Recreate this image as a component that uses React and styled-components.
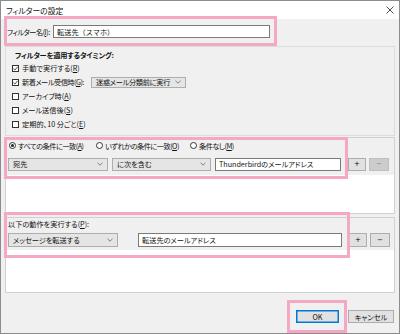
import React from "react";
import styled, { createGlobalStyle } from "styled-components";

const Global = createGlobalStyle`
  html, body { margin: 0; padding: 0; background: #fff; }
  * { box-sizing: border-box; }
  body {
    font-family: "Noto Sans CJK JP", "Noto Sans", sans-serif;
    font-size: 7.2px;
    font-feature-settings: "palt";
    color: #111;
  }
`;

const Window = styled.div`
  position: relative;
  width: 400px;
  height: 334px;
  border: 1px solid #8c8c8c;
  background: #f0f0f0;
  display: flex;
  flex-direction: column;
  overflow: hidden;
`;

const TitleBar = styled.div`
  height: 18px;
  background: #fff;
  display: flex;
  align-items: center;
  justify-content: space-between;
  padding: 0 5px 0 5px;
  font-size: 7.8px;
`;

const CloseIcon = () => (
  <svg width="8" height="8" viewBox="0 0 8 8">
    <path d="M0.5 0.5 L7.5 7.5 M7.5 0.5 L0.5 7.5" stroke="#222" strokeWidth="0.8" />
  </svg>
);

const Body = styled.div`
  flex: 1;
  display: flex;
  flex-direction: column;
  padding: 0 4px;
`;

const NameRow = styled.div`
  margin-top: 6px;
  height: 13px;
  display: flex;
  align-items: center;
  padding-left: 2px;
`;

const Label = styled.span`
  width: ${(p) => (p.$w ? p.$w + "px" : "auto")};
  flex: none;
  white-space: nowrap;
  letter-spacing: ${(p) => (p.$tight ? "-0.5px" : "0")};
`;

const TextInput = styled.div`
  width: ${(p) => p.$w}px;
  height: ${(p) => p.$h || 13}px;
  margin-left: ${(p) => p.$ml || 0}px;
  background: #fff;
  border: 1px solid #7a7a7a;
  display: flex;
  align-items: center;
  padding-left: 3px;
  white-space: nowrap;
  flex: none;
  font-feature-settings: ${(p) => (p.$wide ? "normal" : "'palt'")};
`;

const Group = styled.div`
  margin-top: 8px;
  height: 90px;
  border: 1px solid #dcdcdc;
  display: flex;
  flex-direction: column;
  padding: 3px 0 0 6px;
`;

const GroupTitle = styled.div`
  height: 10px;
  display: flex;
  align-items: center;
  padding-left: 3px;
  font-weight: 700;
  letter-spacing: -0.2px;
  margin-bottom: 1px;
`;

const CheckRow = styled.div`
  height: 14px;
  display: flex;
  align-items: center;
  gap: 3px;
`;

const Box = styled.span`
  width: 7px;
  height: 7px;
  border: 1px solid #333;
  background: #fff;
  flex: none;
  display: flex;
  align-items: center;
  justify-content: center;
`;

const Check = ({ on }) => (
  <Box>
    {on && (
      <svg width="5" height="5" viewBox="0 0 5 5">
        <path d="M0.4 2.6 L1.9 4 L4.6 0.8" stroke="#222" strokeWidth="0.8" fill="none" />
      </svg>
    )}
  </Box>
);

const Select = styled.div`
  width: ${(p) => p.$w}px;
  height: ${(p) => p.$h || 13}px;
  margin-left: ${(p) => p.$ml || 0}px;
  background: #e5e5e5;
  border: 1px solid #adadad;
  display: flex;
  align-items: center;
  justify-content: space-between;
  padding: 0 4px 0 4px;
  white-space: nowrap;
  flex: none;
  letter-spacing: ${(p) => (p.$tight ? "-0.3px" : "0")};
`;

const Chevron = () => (
  <svg width="6" height="4" viewBox="0 0 6 4">
    <path d="M0.5 0.8 L3 3.2 L5.5 0.8" stroke="#555" strokeWidth="0.7" fill="none" />
  </svg>
);

const SectionBox = styled.div`
  margin-top: ${(p) => p.$mt || 0}px;
  height: ${(p) => p.$h}px;
  border: 1px solid #d0d0d0;
  display: flex;
  flex-direction: column;
  background: #fff;
`;

const SectionHeader = styled.div`
  height: ${(p) => p.$h}px;
  background: #f0f0f0;
  display: flex;
  align-items: center;
  padding-left: ${(p) => p.$pl || 3}px;
  flex: none;
`;

const RadioItem = styled.span`
  width: ${(p) => (p.$w ? p.$w + "px" : "auto")};
  display: flex;
  align-items: center;
  gap: 2px;
  white-space: nowrap;
  flex: none;
  letter-spacing: -0.5px;
`;

const RadioCircle = styled.span`
  width: 7px;
  height: 7px;
  border-radius: 50%;
  border: 1px solid #333;
  background: #fff;
  display: flex;
  align-items: center;
  justify-content: center;
  &::after {
    content: "";
    width: 3px;
    height: 3px;
    border-radius: 50%;
    background: ${(p) => (p.$on ? "#222" : "transparent")};
  }
`;

const RuleRow = styled.div`
  height: ${(p) => p.$h}px;
  background: #f0f0f0;
  display: flex;
  align-items: center;
  padding-left: 2px;
  flex: none;
`;

const SmallButton = styled.div`
  width: ${(p) => p.$w}px;
  height: ${(p) => p.$h || 13}px;
  margin-left: ${(p) => p.$ml}px;
  background: ${(p) => (p.$disabled ? "#cccccc" : "#e1e1e1")};
  border: 1px solid ${(p) => (p.$disabled ? "#bfbfbf" : "#adadad")};
  color: ${(p) => (p.$disabled ? "#8a8a8a" : "#000")};
  display: flex;
  align-items: center;
  justify-content: center;
  font-size: 7px;
  font-family: "DejaVu Sans", sans-serif;
  flex: none;
`;

const Footer = styled.div`
  display: flex;
  justify-content: flex-end;
  padding: 17px 1px 0 0;
  gap: 9px;
`;

const DialogButton = styled.div`
  width: ${(p) => p.$w}px;
  height: 13px;
  background: #e1e1e1;
  border: 1px solid ${(p) => (p.$default ? "#0078d7" : "#adadad")};
  box-shadow: ${(p) => (p.$default ? "inset 0 0 0 0.5px #0078d7" : "none")};
  display: flex;
  align-items: center;
  justify-content: center;
  white-space: nowrap;
`;

const Highlight = styled.div`
  position: absolute;
  left: ${(p) => p.$x}px;
  top: ${(p) => p.$y}px;
  width: ${(p) => p.$w}px;
  height: ${(p) => p.$h}px;
  border: 3px solid #f4a8c6;
  pointer-events: none;
`;

export default function App() {
  return (
    <>
      <Global />
      <Window>
        <TitleBar>
          <span>フィルターの設定</span>
          <CloseIcon />
        </TitleBar>
        <Body>
          <NameRow>
            <Label $w={46} $tight>フィルター名(<u>I</u>):</Label>
            <TextInput $w={217} $wide>転送先（スマホ）</TextInput>
          </NameRow>

          <Group>
            <GroupTitle>フィルターを適用するタイミング:</GroupTitle>
            <CheckRow>
              <Check on />
              <Label>手動で実行する(<u>R</u>)</Label>
            </CheckRow>
            <CheckRow>
              <Check on />
              <Label $w={66} $tight>新着メール受信時(<u>G</u>):</Label>
              <Select $w={95} $h={11} $tight>
                <span>迷惑メール分類前に実行</span>
                <Chevron />
              </Select>
            </CheckRow>
            <CheckRow>
              <Check />
              <Label>アーカイブ時(<u>A</u>)</Label>
            </CheckRow>
            <CheckRow>
              <Check />
              <Label>メール送信後(<u>S</u>)</Label>
            </CheckRow>
            <CheckRow>
              <Check />
              <Label>定期的、10 分ごと(<u>E</u>)</Label>
            </CheckRow>
          </Group>

          <SectionBox $mt={1} $h={77}>
            <SectionHeader $h={15} $pl={3}>
              <RadioItem $w={87}>
                <RadioCircle $on />
                <span>すべての条件に一致(<u>A</u>)</span>
              </RadioItem>
              <RadioItem $w={94}>
                <RadioCircle />
                <span>いずれかの条件に一致(<u>O</u>)</span>
              </RadioItem>
              <RadioItem>
                <RadioCircle />
                <span>条件なし(<u>M</u>)</span>
              </RadioItem>
            </SectionHeader>
            <RuleRow $h={22}>
              <Select $w={100}>
                <span>宛先</span>
                <Chevron />
              </Select>
              <Select $w={99} $ml={4}>
                <span>に次を含む</span>
                <Chevron />
              </Select>
              <TextInput $w={126} $ml={4}>Thunderbirdのメールアドレス</TextInput>
              <SmallButton $w={18} $ml={7}>+</SmallButton>
              <SmallButton $w={20} $ml={3} $disabled>−</SmallButton>
            </RuleRow>
          </SectionBox>

          <SectionBox $mt={3} $h={76}>
            <SectionHeader $h={11} $pl={2}>
              <Label>以下の動作を実行する(<u>P</u>):</Label>
            </SectionHeader>
            <RuleRow $h={21}>
              <Select $w={110} $h={14}>
                <span>メッセージを転送する</span>
                <Chevron />
              </Select>
              <TextInput $w={204} $h={14} $ml={20}>転送先のメールアドレス</TextInput>
              <SmallButton $w={18} $h={14} $ml={7}>+</SmallButton>
              <SmallButton $w={20} $h={14} $ml={3}>−</SmallButton>
            </RuleRow>
          </SectionBox>

          <Footer>
            <DialogButton $w={43} $default>OK</DialogButton>
            <DialogButton $w={46}>キャンセル</DialogButton>
          </Footer>
        </Body>

        <Highlight $x={3} $y={15} $w={273} $h={30} />
        <Highlight $x={3} $y={136} $w={344} $h={42} />
        <Highlight $x={3} $y={211} $w={346} $h={46} />
        <Highlight $x={286} $y={299} $w={60} $h={33} />
      </Window>
    </>
  );
}
